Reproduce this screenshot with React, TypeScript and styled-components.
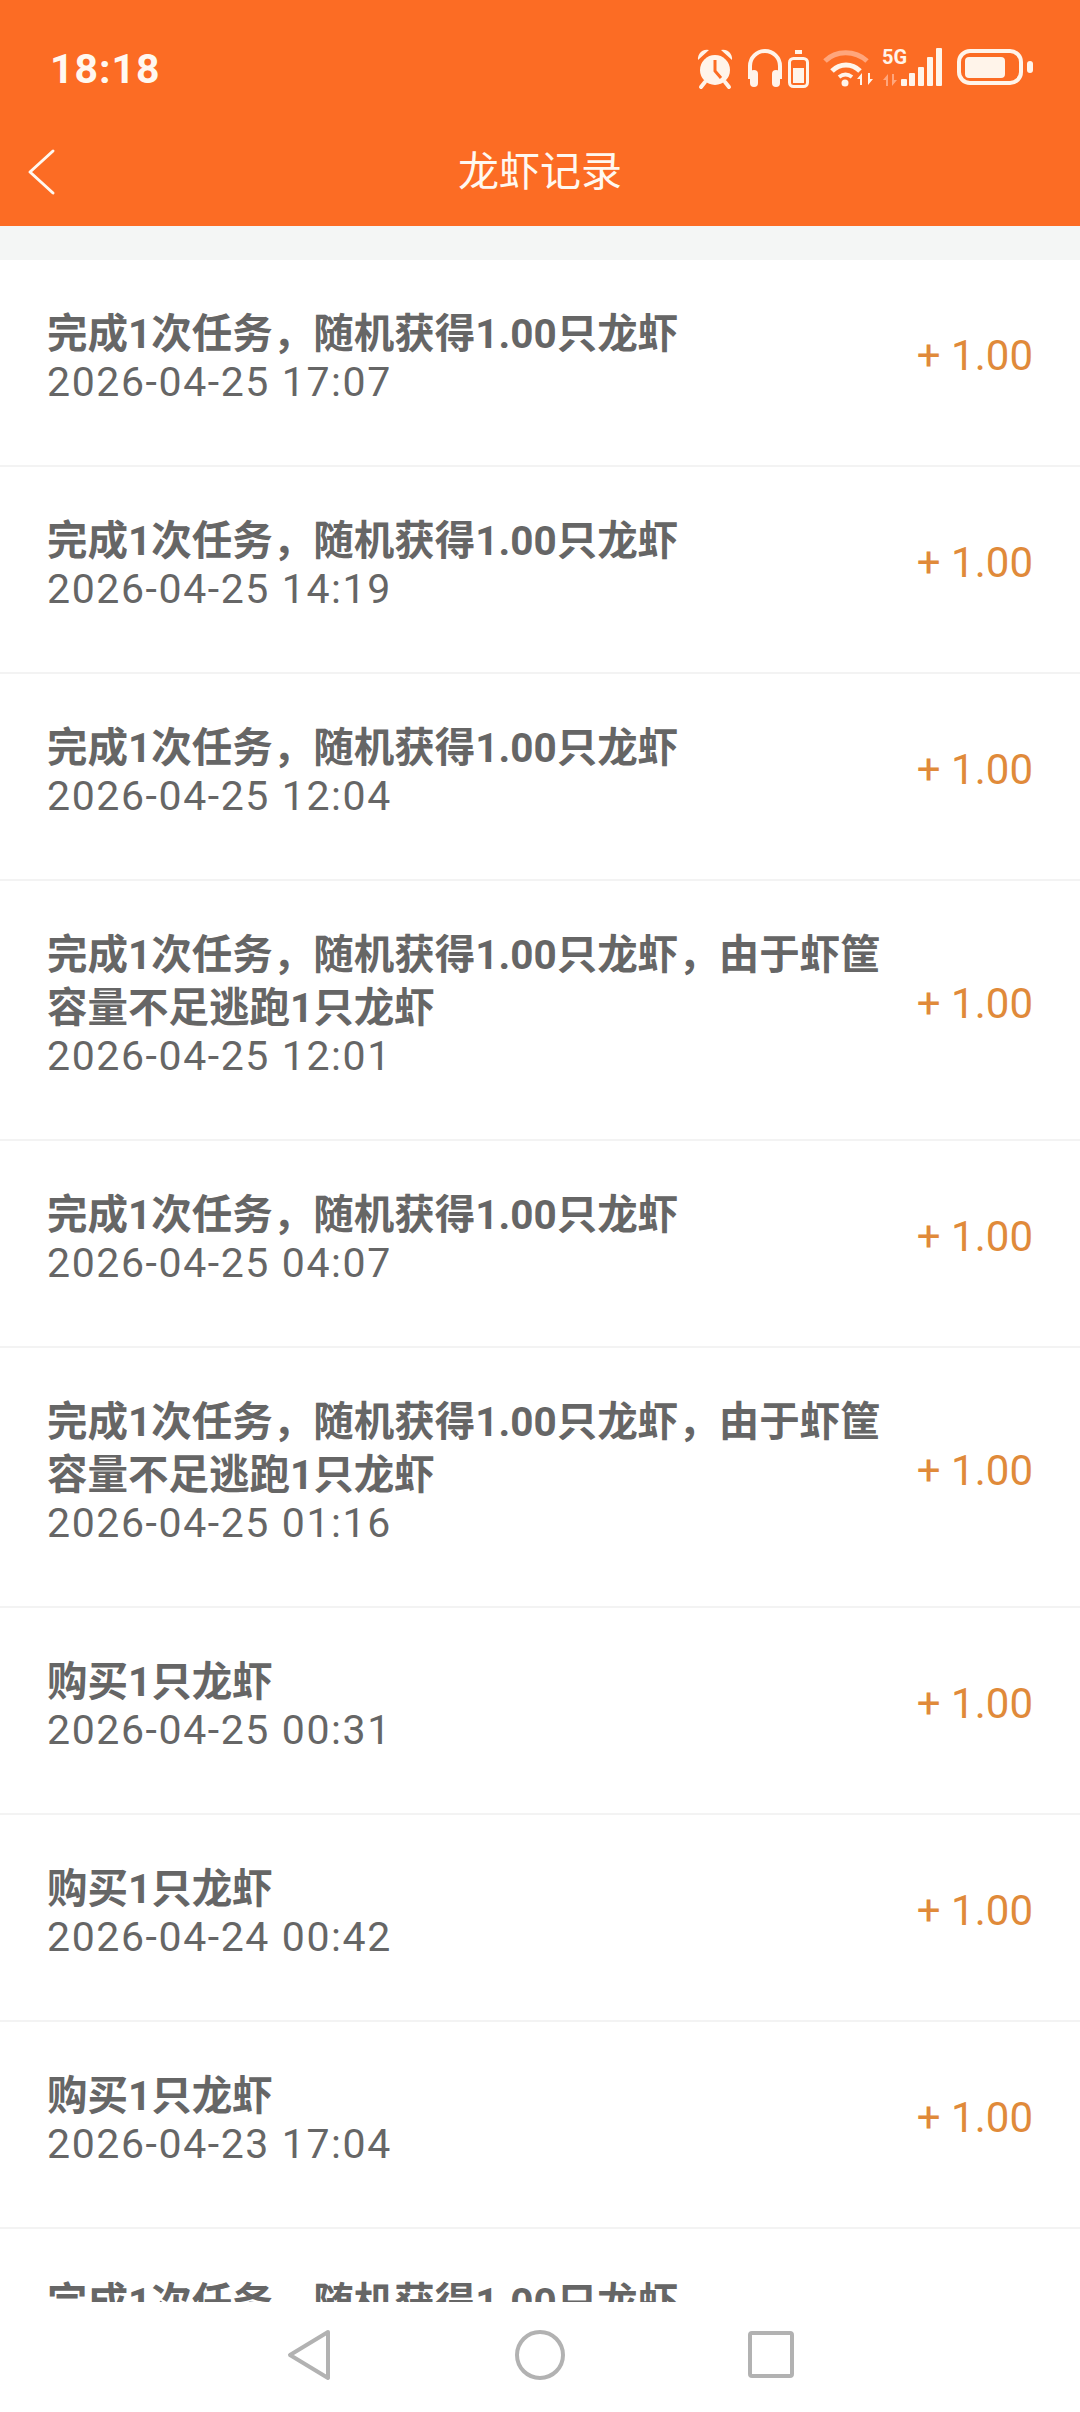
import styled, { createGlobalStyle } from "styled-components";

const GlobalStyle = createGlobalStyle`
  html, body {
    margin: 0;
    padding: 0;
    background-color: #ffffff;
  }
  * {
    box-sizing: border-box;
  }
`;

const StPage = styled.div`
  display: flex;
  flex-direction: column;
  width: 1080px;
  height: 2412px;
  overflow: hidden;
  background-color: #ffffff;
  font-family: "Roboto", "Noto Sans CJK SC", sans-serif;
`;

const StHeader = styled.header`
  flex: 0 0 226px;
  display: flex;
  flex-direction: column;
  background-color: #fc6c24;
  color: #fff8f0;
`;

const StStatusBar = styled.div`
  display: flex;
  justify-content: space-between;
  align-items: center;
  height: 68px;
  margin-top: 35px;
  padding: 0 47px 0 50px;
`;

const StClock = styled.span`
  font-size: 41px;
  font-weight: 700;
  letter-spacing: 1px;
`;

const StStatusIcons = styled.svg`
  overflow: visible;
`;

const StNavBar = styled.div`
  display: flex;
  align-items: center;
  justify-content: center;
  position: relative;
  height: 72px;
  margin-top: 29px;
`;

const StBack = styled.svg`
  position: absolute;
  left: 25px;
  top: 16px;
`;

const StTitle = styled.h1`
  margin: 0;
  font-size: 41px;
  font-weight: 400;
`;

const StGap = styled.div`
  flex: 0 0 34px;
  background-color: #f4f6f5;
`;

const StList = styled.div`
  flex: 1;
  overflow: hidden;
`;

const StRow = styled.div<{ $lines: number }>`
  display: flex;
  align-items: center;
  justify-content: space-between;
  padding: 0 47px 14px;
  height: ${({ $lines }) => ($lines > 1 ? 260 : 207)}px;
  border-bottom: 2px solid #f3f3f3;
`;

const StText = styled.div`
  width: 850px;
`;

const StDesc = styled.div`
  color: #666666;
  font-size: 40.5px;
  font-weight: 700;
  line-height: 53px;
`;

const StDate = styled.div`
  color: #666666;
  font-size: 41px;
  line-height: 43px;
  letter-spacing: 1.6px;
`;

const StAmount = styled.div`
  color: #e08a3a;
  font-size: 42px;
  white-space: nowrap;
`;

const StBottomNav = styled.nav`
  flex: 0 0 110px;
  display: flex;
  justify-content: center;
  align-items: center;
  gap: 181px;
  padding-bottom: 4px;
  background-color: #ffffff;
`;

const light = "#fff4ea";
const dim = "#ffa67c";
const orange = "#fc6c24";

const StatusIcons = () => (
  <StStatusIcons width="336" height="44" viewBox="0 0 336 44" fill="none">
    {/* alarm */}
    <circle cx="18" cy="23" r="15" fill={light} />
    <path d="M1 13 A9 9 0 0 1 12 3 Z M35 13 A9 9 0 0 0 24 3 Z" fill={light} />
    <path d="M8 35 L4 40 M28 35 L32 40" stroke={light} strokeWidth="4" strokeLinecap="round" />
    <path d="M18 13 V24 L24 31" stroke={orange} strokeWidth="3" />
    {/* headphones */}
    <path d="M53 32 V19 A15 15 0 0 1 83 19 V32" stroke={light} strokeWidth="4" />
    <rect x="53" y="23" width="8" height="17" rx="4" fill={light} />
    <rect x="75" y="23" width="8" height="17" rx="4" fill={light} />
    {/* phone battery */}
    <rect x="98" y="3" width="7" height="4" fill={light} />
    <rect x="92.5" y="11.5" width="18" height="28" rx="4" stroke={light} strokeWidth="3" />
    <rect x="96" y="21" width="11" height="15" fill={light} />
    {/* wifi */}
    <path d="M128 14 C139 3 158 3 170 14" stroke={dim} strokeWidth="5" />
    <path d="M135 24 C143 16 155 16 163 24" stroke={light} strokeWidth="5" />
    <path d="M142 30 C146 27 151 27 155 30" stroke={light} strokeWidth="4" />
    <circle cx="148" cy="36" r="3.5" fill={light} />
    <path d="M160 32 L165 26 V38 H163 V32 Z M176 32 L171 38 V26 H173 V32 Z" fill={light} />
    {/* 5G */}
    <text x="185" y="17" fill={light} fontFamily="Roboto, sans-serif" fontWeight="700" fontSize="20">
      5G
    </text>
    <path d="M186 33 L191 27 V39 H189 V33 Z M200 33 L195 39 V27 H197 V33 Z" fill={dim} />
    <rect x="204" y="32" width="6" height="7" rx="1" fill={light} />
    <rect x="212" y="26" width="6" height="13" rx="1" fill={light} />
    <rect x="221" y="20" width="6" height="19" rx="1" fill={light} />
    <rect x="230" y="10" width="6" height="29" rx="1" fill={light} />
    <rect x="239" y="1" width="6" height="38" rx="1" fill={light} />
    {/* battery */}
    <rect x="262" y="4" width="62" height="32" rx="11" stroke={light} strokeWidth="4" />
    <rect x="268" y="10" width="40" height="21" rx="4" fill={light} />
    <rect x="330" y="14" width="6" height="12" rx="3" fill={light} />
  </StStatusIcons>
);

const records = [
  { desc: "完成1次任务，随机获得1.00只龙虾", date: "2026-04-25 17:07" },
  { desc: "完成1次任务，随机获得1.00只龙虾", date: "2026-04-25 14:19" },
  { desc: "完成1次任务，随机获得1.00只龙虾", date: "2026-04-25 12:04" },
  { desc: "完成1次任务，随机获得1.00只龙虾，由于虾筐容量不足逃跑1只龙虾", date: "2026-04-25 12:01", lines: 2 },
  { desc: "完成1次任务，随机获得1.00只龙虾", date: "2026-04-25 04:07" },
  { desc: "完成1次任务，随机获得1.00只龙虾，由于虾筐容量不足逃跑1只龙虾", date: "2026-04-25 01:16", lines: 2 },
  { desc: "购买1只龙虾", date: "2026-04-25 00:31" },
  { desc: "购买1只龙虾", date: "2026-04-24 00:42" },
  { desc: "购买1只龙虾", date: "2026-04-23 17:04" },
  { desc: "完成1次任务，随机获得1.00只龙虾", date: "2026-04-23 12:30" },
];

const App = () => {
  return (
    <StPage>
      <GlobalStyle />
      <StHeader>
        <StStatusBar>
          <StClock>18:18</StClock>
          <StatusIcons />
        </StStatusBar>
        <StNavBar>
          <StBack width="34" height="50" viewBox="0 0 34 50" fill="none">
            <path d="M28 3 L5 24 L28 45" stroke="#fff8f0" strokeWidth="3" strokeLinecap="round" strokeLinejoin="round" />
          </StBack>
          <StTitle>龙虾记录</StTitle>
        </StNavBar>
      </StHeader>
      <StGap />
      <StList>
        {records.map((item, i) => (
          <StRow key={i} $lines={item.lines ?? 1}>
            <StText>
              <StDesc>{item.desc}</StDesc>
              <StDate>{item.date}</StDate>
            </StText>
            <StAmount>+ 1.00</StAmount>
          </StRow>
        ))}
      </StList>
      <StBottomNav>
        <svg width="50" height="52" viewBox="0 0 50 52" fill="none">
          <path d="M44 3 L6 26 L44 49 Z" stroke="#b2b2b2" strokeWidth="4" strokeLinejoin="round" />
        </svg>
        <svg width="50" height="52" viewBox="0 0 50 52" fill="none">
          <circle cx="25" cy="26" r="23" stroke="#b2b2b2" strokeWidth="4" />
        </svg>
        <svg width="50" height="52" viewBox="0 0 50 52" fill="none">
          <rect x="4" y="4" width="42" height="43" rx="2" stroke="#b2b2b2" strokeWidth="4" />
        </svg>
      </StBottomNav>
    </StPage>
  );
};

export default App;
